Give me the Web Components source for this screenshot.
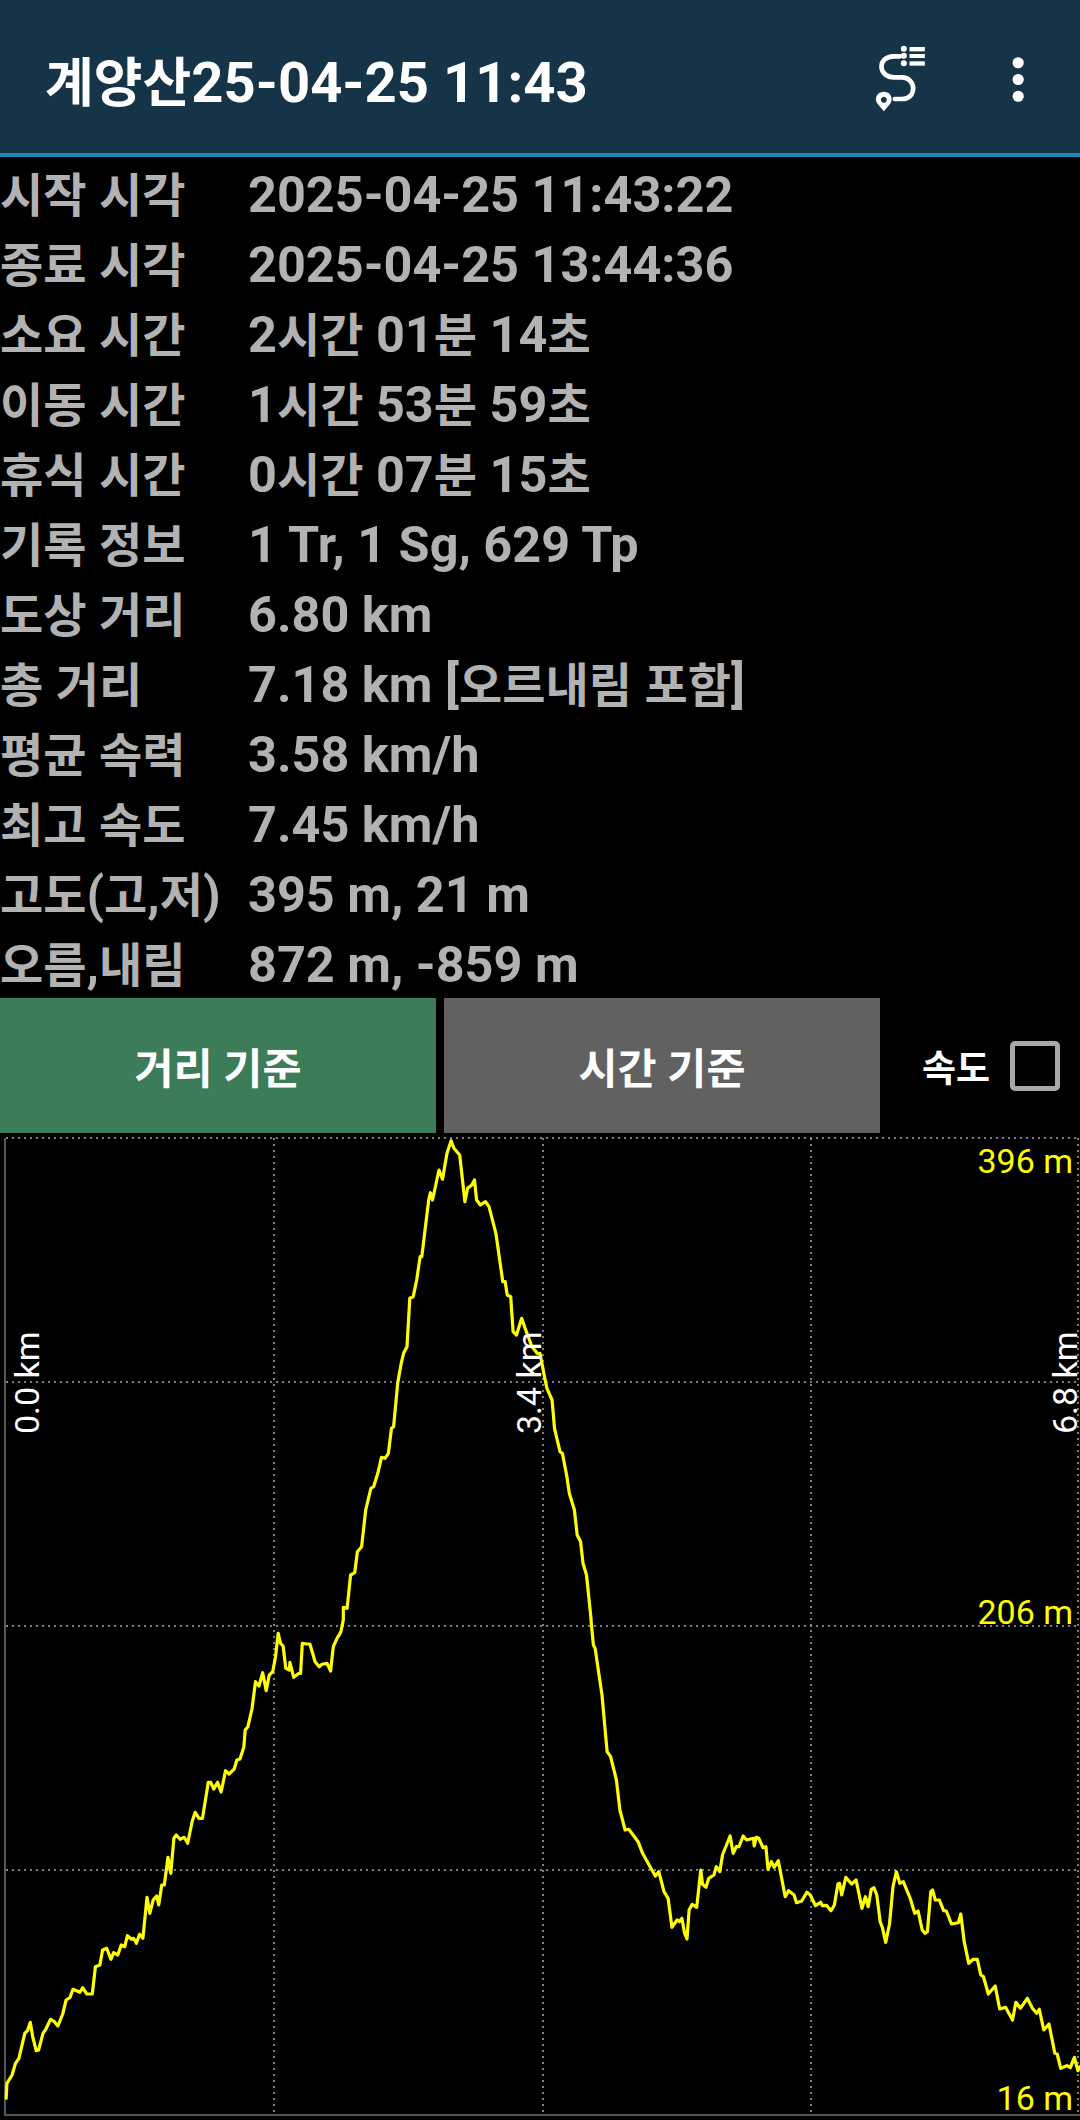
<!DOCTYPE html>
<html lang="ko">
<head>
<meta charset="utf-8">
<title>계양산</title>
<style>
  html,body{margin:0;padding:0;background:#000;}
  body{width:1080px;height:2120px;overflow:hidden;font-family:Roboto,"Noto Sans CJK KR",sans-serif;}
</style>
</head>
<body>
<track-app>
  <app-bar title-text="계양산25-04-25 11:43"></app-bar>
  <stat-list>
    <stat-row label="시작 시각" value="2025-04-25 11:43:22"></stat-row>
    <stat-row label="종료 시각" value="2025-04-25 13:44:36"></stat-row>
    <stat-row label="소요 시간" value="2시간 01분 14초"></stat-row>
    <stat-row label="이동 시간" value="1시간 53분 59초"></stat-row>
    <stat-row label="휴식 시간" value="0시간 07분 15초"></stat-row>
    <stat-row label="기록 정보" value="1 Tr, 1 Sg, 629 Tp"></stat-row>
    <stat-row label="도상 거리" value="6.80 km"></stat-row>
    <stat-row label="총 거리" value="7.18 km [오르내림 포함]"></stat-row>
    <stat-row label="평균 속력" value="3.58 km/h"></stat-row>
    <stat-row label="최고 속도" value="7.45 km/h"></stat-row>
    <stat-row label="고도(고,저)" value="395 m, 21 m"></stat-row>
    <stat-row label="오름,내림" value="872 m, -859 m"></stat-row>
  </stat-list>
  <mode-bar>
    <mode-button color="#3c7c59">거리 기준</mode-button>
    <mode-button color="#616161">시간 기준</mode-button>
    <speed-check>속도</speed-check>
  </mode-bar>
  <elevation-chart></elevation-chart>
</track-app>

<script>
const FONT='Roboto,"Noto Sans CJK KR",sans-serif';
// hangul runs are a little smaller than the latin text next to them
const ko=s=>s.replace(/[\uAC00-\uD7A3]+/g,m=>`<span class="ko">${m}</span>`);

class trackApp extends HTMLElement{
  constructor(){
    super();
    this.attachShadow({mode:'open'}).innerHTML=`
    <style>
      :host{display:flex;flex-direction:column;width:1080px;height:2120px;background:#000;}
    </style>
    <slot></slot>`;
  }
}

class appBar extends HTMLElement{
  constructor(){
    super();
    this.attachShadow({mode:'open'}).innerHTML=`
    <style>
      :host{display:flex;align-items:center;box-sizing:border-box;height:157px;background:#153447;border-bottom:4px solid #1789b5;color:#fff;font:bold 56.2px/80px ${FONT};}
      .title{flex:1;padding:14px 0 0 45px;white-space:nowrap;}
      .ko{font-size:53px;}
      svg{display:block;flex:none;}
      .route{margin-right:78px;margin-top:3px;}
      .more{margin-right:50px;margin-top:3px;}
    </style>
    <div class="title">${ko(this.getAttribute('title-text')||"")}</div>
    <svg class="route" width="57" height="70" viewBox="100 70 170 210" fill="#fff">
      <path d="M183 110H165C140 110 128 125 128 141C128 160 145 173 165 173H190C210 173 223 190 223 205C223 225 210 238 190 238H168" fill="none" stroke="#fff" stroke-width="14" stroke-linecap="round"/>
      <path fill-rule="evenodd" d="M135 275L116 252C106 238 112 217 135 216C158 217 164 238 154 252ZM135 231a9 9 0 1 0 .01 0Z"/>
      <circle cx="195" cy="87" r="9"/><circle cx="195" cy="108" r="9"/><circle cx="195" cy="131" r="9"/>
      <rect x="212" y="82" width="46" height="13"/><rect x="212" y="103" width="46" height="12"/><rect x="212" y="125" width="46" height="13"/>
    </svg>
    <svg class="more" width="23" height="48" viewBox="500 100 70 145" fill="#fff">
      <circle cx="534" cy="126" r="17"/><circle cx="534" cy="177" r="17"/><circle cx="534" cy="228" r="17"/>
    </svg>`;
  }
}

class statList extends HTMLElement{
  constructor(){
    super();
    this.attachShadow({mode:'open'}).innerHTML=`
    <style>
      :host{display:flex;flex-direction:column;height:841px;padding-top:3px;box-sizing:border-box;}
    </style>
    <slot></slot>`;
  }
}

class statRow extends HTMLElement{
  constructor(){
    super();
    this.attachShadow({mode:'open'}).innerHTML=`
    <style>
      :host{display:flex;align-items:center;height:70px;color:#b2b2b2;font:bold 50.4px/70px ${FONT};white-space:nowrap;}
      .label{width:248px;flex:none;}
      .ko{font-size:47px;}
    </style>
    <span class="label">${ko(this.getAttribute('label'))}</span>
    <span class="value">${ko(this.getAttribute('value'))}</span>`;
  }
}

class modeBar extends HTMLElement{
  constructor(){
    super();
    this.attachShadow({mode:'open'}).innerHTML=`
    <style>
      :host{display:flex;height:135px;gap:8px;}
    </style>
    <slot></slot>`;
  }
}

class modeButton extends HTMLElement{
  constructor(){
    super();
    this.attachShadow({mode:'open'}).innerHTML=`
    <style>
      :host{display:flex;align-items:center;justify-content:center;width:436px;flex:none;color:#fff;background:${this.getAttribute('color')};font:bold 42.5px ${FONT};}
    </style>
    <slot></slot>`;
  }
}

class speedCheck extends HTMLElement{
  constructor(){
    super();
    this.attachShadow({mode:'open'}).innerHTML=`
    <style>
      :host{display:flex;align-items:center;flex:1;padding-left:34px;color:#fff;font:bold 37px ${FONT};}
      .box{box-sizing:border-box;width:50px;height:50px;margin-left:20px;border:5px solid #a8a8a8;border-radius:5px;}
    </style>
    <slot></slot><div class="box"></div>`;
  }
}

// elevation trace read off the reference, one list per crop: [x0,y0,scaleX,scaleY,points]
const TRACE=[
  [0,1620,2.904,3,[18,1435,20,1390,35,1365,45,1330,55,1315,72,1240,80,1232,88,1207,95,1250,105,1292,112,1290,125,1240,133,1228,147,1198,158,1205,168,1218,182,1182,192,1140,203,1133,212,1108,232,1117,240,1103,252,1122,268,1122,277,1040,290,1035,298,990,310,985,322,1018,330,998,342,1005,352,975,362,980,370,947,382,958,388,955,396,970,405,943,415,955,427,832,435,880,445,840,455,828,461,855,470,795,477,795,488,712,496,760,505,655,512,645,523,658,535,652,545,670,558,605,567,577,578,595,588,595,605,487,612,487,621,507,632,487,642,516,655,452,665,462,680,447,688,420,697,417,708,382,712,330,720,320,732,265,742,185,752,198,763,158,773,212,782,165,792,155,800,110,808,40,815,70,822,78,830,145,840,150,842,127,853,172,868,160,873,160,878,70,890,72,900,72,915,125,927,140,935,133,950,130,960,153,968,80,980,52,985,45,990,35,997,0]],
  [0,1120,2.904,3,[997,1462,1008,1465,1018,1365,1030,1358,1038,1295,1050,1280,1062,1170,1077,1105,1085,1100,1097,1060,1108,1012,1118,1015,1128,1000,1137,925,1143,920,1155,790,1165,730,1172,700,1182,680,1190,535,1200,530,1210,480,1220,410,1225,410,1245,240,1250,218,1256,240,1275,150,1285,178,1298,100,1310,62,1318,85,1335,105,1350,245,1358,205,1370,195,1378,180,1384,240,1395,255,1410,245,1420,260,1440,340,1460,485,1467,485,1473,525,1483,530,1490,635,1500,645,1515,595,1525,625,1545,680,1560,700]],
  [540,1120,2.904,3,[0,700,14,775,20,805,35,840,42,925,58,995,65,1000,78,1070,85,1120,100,1170,108,1245,118,1265,125,1330,135,1365,148,1495]],
  [540,1620,2.904,3,[148,0,155,75,160,85,180,225,195,395,205,410,222,480,232,570,247,630,258,628,285,665,298,700,322,745,335,768,345,755,360,815,372,835,383,922,398,900,405,905,412,895,420,940,427,957,433,870,442,853,455,862,467,750,472,793,482,802,490,775,505,765,512,740,522,755,530,705,552,648,561,700,570,680,578,680,590,648,600,660,620,655,622,678,628,652,635,655,648,683,656,680,662,748,672,725,680,742,692,722,712,830,722,812,738,825,745,848,760,843,775,817,785,825,800,857,815,847,820,857,832,856,845,872,855,855,865,792,870,790,876,825,888,772,905,792,918,780,935,865,945,830,953,860,962,808,970,803,978,825,988,905,995,925,1004,967,1015,912,1025,800,1035,755,1045,790,1055,785,1075,835,1088,880,1098,873,1110,930,1118,940,1125,935,1135,815,1140,810,1148,840,1160,840,1172,872,1180,873,1195,912,1215,908,1222,882,1232,965,1245,1030,1258,1018,1270,1018,1280,1065,1288,1070,1302,1122,1322,1098,1335,1167,1352,1162,1372,1200,1382,1147,1395,1165,1415,1135,1430,1165,1442,1180,1450,1168,1463,1230,1478,1212,1495,1300,1502,1302,1512,1345,1530,1337,1540,1343,1552,1312,1562,1352,1568,1340]]
];

class elevationChart extends HTMLElement{
  constructor(){
    super();
    const pts=[];
    TRACE.forEach(([x0,y0,sx,sy,list])=>{
      for(let i=0;i<list.length;i+=2){
        pts.push((x0+list[i]/sx).toFixed(1)+","+(y0+list[i+1]/sy).toFixed(1));
      }
    });
    const vx=[274,543,811,1078];
    const hy=[1138,1382,1626,1870];
    const grid=vx.map(x=>`<line x1="${x}" y1="1138" x2="${x}" y2="2113"/>`).join("")
      +hy.map(y=>`<line x1="6" y1="${y}" x2="1080" y2="${y}"/>`).join("");
    this.attachShadow({mode:'open'}).innerHTML=`
    <style>
      :host{display:block;position:relative;height:987px;font:34px ${FONT};}
      svg{position:absolute;left:0;top:0;}
      .y{position:absolute;right:7px;color:#ff0;line-height:36px;white-space:nowrap;}
      .x{position:absolute;top:201px;color:#fff;line-height:30px;white-space:nowrap;writing-mode:vertical-rl;transform:rotate(180deg);height:100px;text-align:left;}
    </style>
    <svg width="1080" height="987" viewBox="0 1133 1080 987">
      <g stroke="#aaa" stroke-width="1.5" stroke-dasharray="2 4" fill="none">${grid}</g>
      <path d="M5 1138V2115H1080" fill="none" stroke="#555" stroke-width="2"/>
      <polyline points="${pts.join(" ")}" fill="none" stroke="#ff0" stroke-width="3.2" stroke-linejoin="round" stroke-linecap="round"/>
    </svg>
    <span class="y" style="top:10px">396 m</span>
    <span class="y" style="top:461px">206 m</span>
    <span class="y" style="top:947px">16 m</span>
    <span class="x" style="left:12px">0.0 km</span>
    <span class="x" style="left:514px">3.4 km</span>
    <span class="x" style="left:1050px">6.8 km</span>`;
  }
}

customElements.define('track-app',trackApp);
customElements.define('app-bar',appBar);
customElements.define('stat-list',statList);
customElements.define('stat-row',statRow);
customElements.define('mode-bar',modeBar);
customElements.define('mode-button',modeButton);
customElements.define('speed-check',speedCheck);
customElements.define('elevation-chart',elevationChart);
</script>
</body>
</html>
